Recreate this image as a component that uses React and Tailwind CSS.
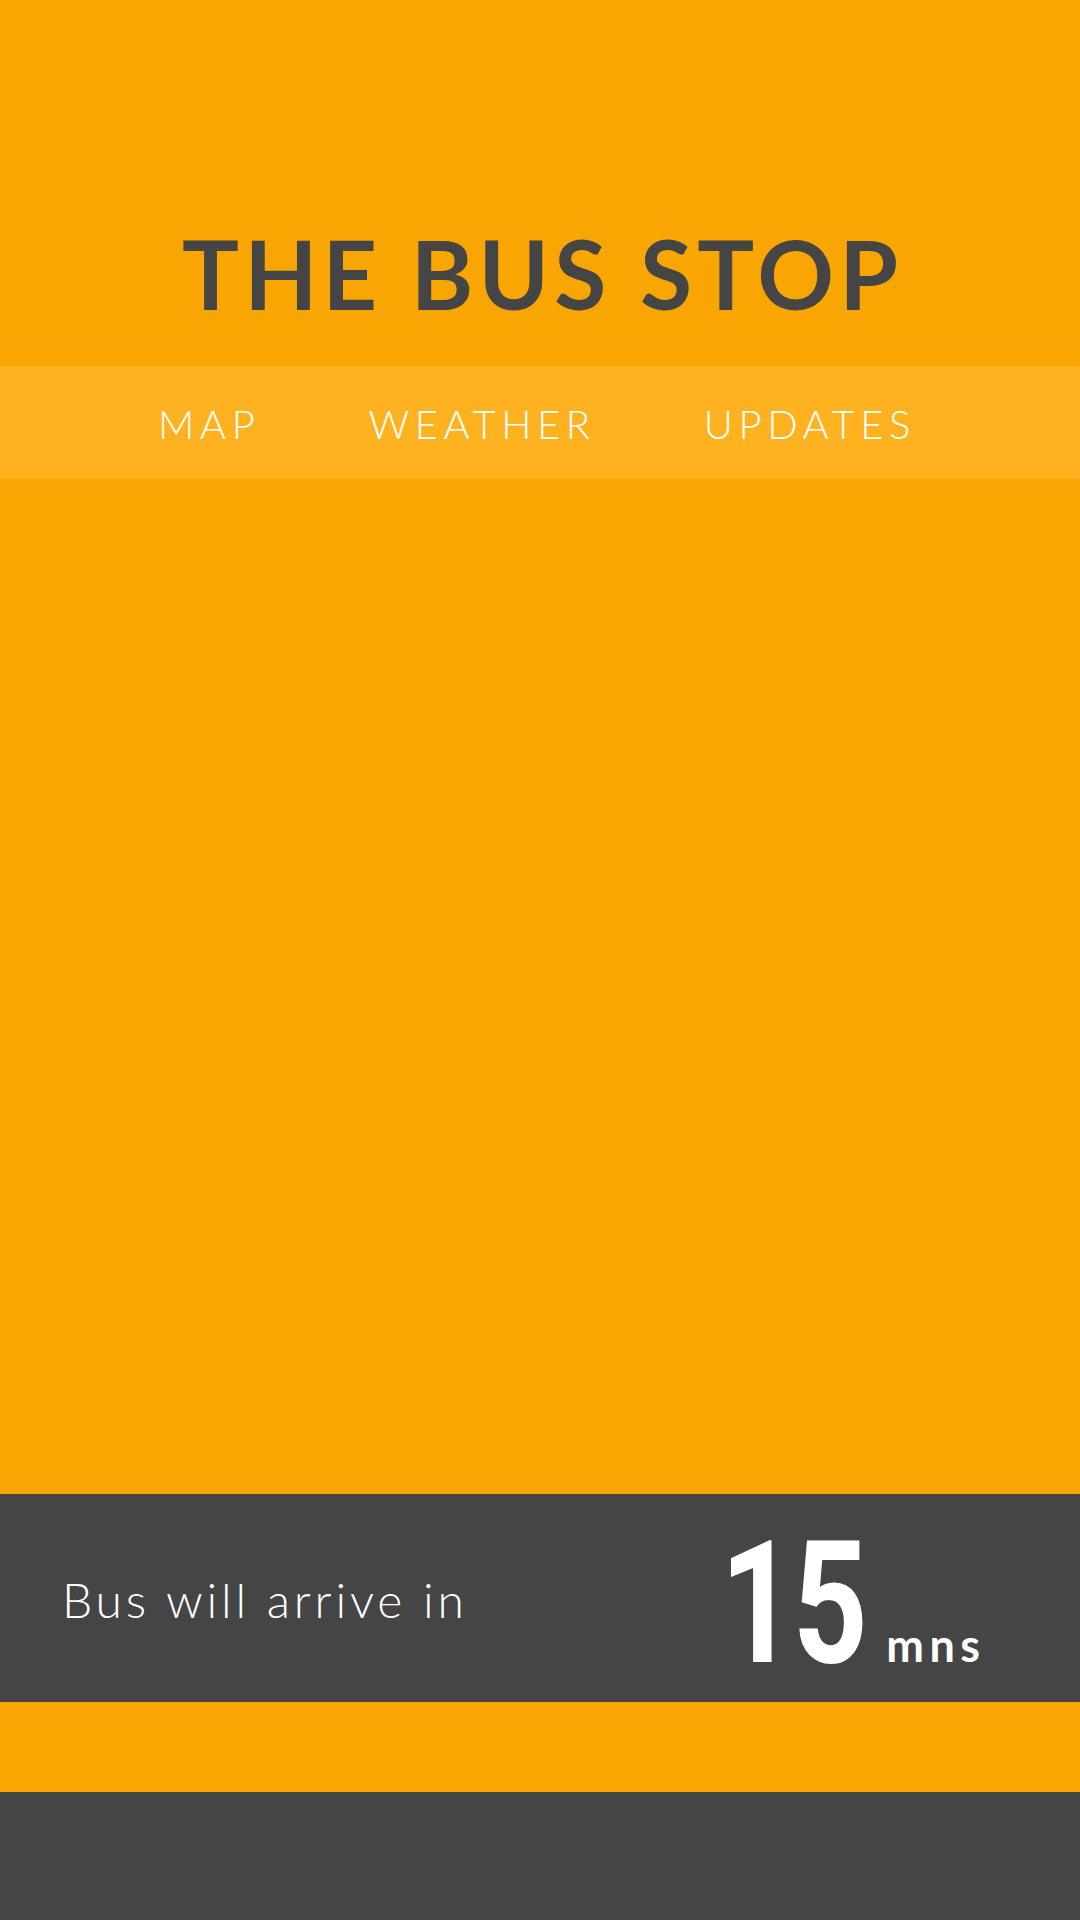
import React from "react";

const tabs = ["MAP", "WEATHER", "UPDATES"];

function App() {
  return (
    <div className="w-[1080px] h-[1920px] flex flex-col bg-[#f9a603] font-['Lato','Noto_Sans',sans-serif]">
      <header className="h-[366px] flex items-end justify-center pb-[45px]">
        <h1 className="text-[95px] leading-none font-bold tracking-[0.055em] text-[#454545] pl-[0.055em]">
          THE BUS STOP
        </h1>
      </header>

      <nav className="h-[113px] bg-[#ffb21f] flex items-center justify-center gap-[108px] pr-[6px]">
        {tabs.map((tab) => (
          <span
            key={tab}
            className="text-[40px] leading-none font-light tracking-[0.14em] text-white pt-[2px]"
          >
            {tab}
          </span>
        ))}
      </nav>

      <main className="flex-1"></main>

      <section className="h-[208px] bg-[#454545] flex items-center justify-between pl-[62px] pr-[100px]">
        <p className="text-[48px] leading-none font-light tracking-[0.08em] text-white mt-[4px]">
          Bus will arrive in
        </p>
        <div className="flex items-baseline mt-[12px]">
          <span className="text-[170px] leading-none font-bold text-white font-['Roboto',sans-serif] inline-block scale-x-[0.77] origin-right tracking-[-0.02em]">
            15
          </span>
          <span className="text-[45px] leading-none font-bold tracking-[0.12em] text-white ml-[21px] -mr-[0.12em]">
            mns
          </span>
        </div>
      </section>

      <div className="h-[90px] bg-[#f9a603]"></div>
      <footer className="h-[128px] bg-[#454545]"></footer>
    </div>
  );
}

export default App;
